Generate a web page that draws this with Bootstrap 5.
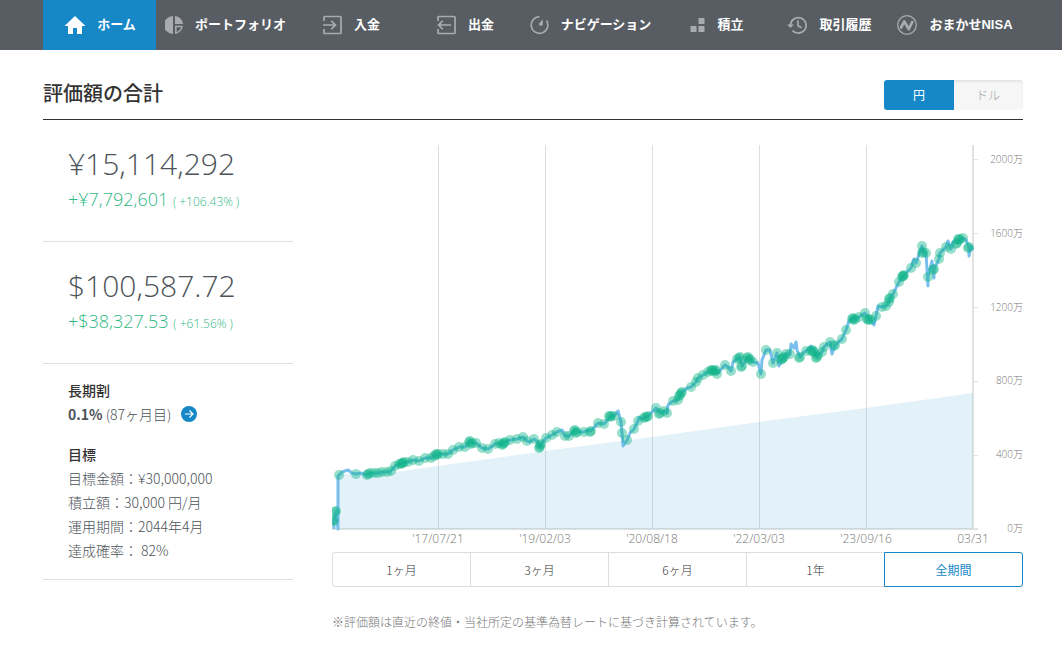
<!DOCTYPE html>
<html lang="ja">
<head>
<meta charset="utf-8">
<meta name="viewport" content="width=device-width, initial-scale=1">
<title>ホーム</title>
<link href="https://cdn.jsdelivr.net/npm/bootstrap@5.3.0/dist/css/bootstrap.min.css" rel="stylesheet">
<style>
body{font-family:"Open Sans","Noto Sans CJK JP",sans-serif;font-weight:300;color:#4d5358;font-size:14px;line-height:24px;background:#fff}
.topbar{background:#575d63;padding:0 35px 0 43px}
.menu{display:grid;grid-template-columns:113fr 139fr 113fr 115fr 135fr 118fr 107fr 144fr}
.menu a{height:50px;color:#fff;font:700 13px/20px "Liberation Sans","Noto Sans CJK JP",sans-serif;white-space:nowrap}
.menu a.active{background:#1788c7}
.menu svg{color:#a9acaf;flex:none;margin-right:12px}
.menu a.active svg{color:#fff;margin-right:10px}
.page{padding:30px 39px 0 43px}
.headline{border-bottom:1px solid #333}
.headline h1{font:500 20px/26px "Noto Sans CJK JP",sans-serif;color:#333;margin:0}
.currency{margin-bottom:9px}
.currency .btn{width:70px;height:30px;padding:0;font:300 12px/28px "Noto Sans CJK JP",sans-serif;border:0;border-radius:3px;color:#9a9ea8;background:#f6f6f6;box-shadow:inset 0 2px 2px #e4e4e4}
.currency .btn + .btn{margin-left:0}
.currency .btn.active{color:#fff;font-weight:400;background:#1788c7;box-shadow:none}
.summary{flex:0 0 250px}
.block{border-bottom:1px solid #e0e0e0;padding-left:25px;height:122px}
.amount{font-size:30px;line-height:40px}
.gain{color:#2fb883;font-size:18px;line-height:30px;white-space:nowrap}
.gain span{font-size:12px}
.plan{border-bottom:1px solid #e0e0e0;padding:14px 0 17px 25px}
.plan h2{font:500 14px/24px "Noto Sans CJK JP",sans-serif;color:#333;margin:0}
.plan p{margin:0;font-family:"Noto Sans CJK JP",sans-serif}
.plan p a{margin-left:10px}
.chartbox{min-width:0;padding-left:39px}
.chartbox svg{display:block;width:100%;height:auto}
.chartbox text{fill:#777;font-size:12px}
.chartbox .ylab text{font-size:10px}
.periods .btn{flex:1 1 0;height:35px;padding:0;border:1px solid #ddd;border-radius:3px;font:300 12px/32px "Noto Sans CJK JP",sans-serif;color:#333}
.periods .btn.active{color:#1788c7;font-weight:400;border-color:#1788c7;background:#fff}
.note{font:300 12px/20px "Noto Sans CJK JP",sans-serif;color:#777;margin:25px 0 0}
</style>
</head>
<body>
<nav class="topbar">
<div class="menu">
<a href="#" class="active d-flex align-items-center justify-content-center text-decoration-none" aria-current="page"><svg width="24" height="20" viewBox="0 0 24 20"><path fill="currentColor" d="M12 1 1.500 11H5v8h5v-6h4v6h5v-8h3.500z"/></svg>ホーム</a>
<a href="#" class="d-flex align-items-center justify-content-center text-decoration-none"><svg width="18" height="20" viewBox="0 0 18 20"><g fill="currentColor"><path d="M8 1a9 9 0 0 0 0 18zM10 1v8h8a9 9 0 0 0-8-8z"/><path fill="none" stroke="currentColor" stroke-width="1.500" d="M10.800 11.500h6.200q-.8 5-6.200 6.500z"/></g></svg>ポートフォリオ</a>
<a href="#" class="d-flex align-items-center justify-content-center text-decoration-none"><svg width="19" height="20" viewBox="0 0 19 20"><g fill="none" stroke="currentColor" stroke-width="1.700"><path d="M1 6V2.200q0-.7.700-.7h15.600q.7 0 .7.700v15.600q0 .7-.7.700H1.700q-.7 0-.7-.7V14M0 10h12M8.300 5.800 12.500 10l-4.200 4.200"/></g></svg>入金</a>
<a href="#" class="d-flex align-items-center justify-content-center text-decoration-none"><svg width="19" height="20" viewBox="0 0 19 20"><g fill="none" stroke="currentColor" stroke-width="1.700"><path d="M1 6V2.200q0-.7.700-.7h15.600q.7 0 .7.700v15.600q0 .7-.7.700H1.700q-.7 0-.7-.7V14M14 10H1.500M5.700 5.800 1.500 10l4.200 4.200"/></g></svg>出金</a>
<a href="#" class="d-flex align-items-center justify-content-center text-decoration-none"><svg width="19" height="20" viewBox="0 0 19 20"><path fill="none" stroke="currentColor" stroke-width="1.600" d="M9.500 1.700A8.300 8.300 0 1 0 16.500 5.500"/><path fill="currentColor" d="M12.800 4.200v5.600q-.6 1.400-2.300.9-2.300-.8-1.200-2.500z"/></svg>ナビゲーション</a>
<a href="#" class="d-flex align-items-center justify-content-center text-decoration-none"><svg width="15" height="20" viewBox="0 0 15 20"><path fill="currentColor" d="M8.500 3h6v6h-6zM.5 11h6v6h-6zM8.500 11h6v6h-6z"/></svg>積立</a>
<a href="#" class="d-flex align-items-center justify-content-center text-decoration-none"><svg width="20" height="20" viewBox="0 0 20 20"><path fill="none" stroke="currentColor" stroke-width="1.700" d="M3.500 10a7.800 7.800 0 1 1 2 5.600M11 5.500v5.200l3.500 2"/><path fill="currentColor" d="M0 9.500h7L3.500 13z"/></svg>取引履歴</a>
<a href="#" class="d-flex align-items-center justify-content-center text-decoration-none"><svg width="20" height="20" viewBox="0 0 20 20"><circle cx="10" cy="10" r="9.300" fill="none" stroke="currentColor" stroke-width="1.300"/><path fill="none" stroke="currentColor" stroke-width="2.700" stroke-linejoin="round" d="m3.500 13.500 3.800-7 4.500 7.500 4-8"/></svg>おまかせNISA</a>
</div>
</nav>
<main class="page">
<header class="headline d-flex justify-content-between align-items-start">
<h1>評価額の合計</h1>
<div class="btn-group currency"><button type="button" class="btn active">円</button><button type="button" class="btn">ドル</button></div>
</header>
<div class="d-flex">
<section class="summary">
<div class="block pt-4"><div class="amount">¥15,114,292</div><div class="gain">+¥7,792,601 <span>( +106.43% )</span></div></div>
<div class="block pt-4"><div class="amount">$100,587.72</div><div class="gain">+$38,327.53 <span>( +61.56% )</span></div></div>
<div class="plan">
<h2>長期割</h2>
<p class="d-flex align-items-center mb-3"><span><b class="fw-bold">0.1%</b> (87ヶ月目)</span><a href="#" class="d-flex" aria-label="長期割の詳細"><svg width="16" height="16" viewBox="0 0 16 16"><circle cx="8" cy="8" r="8" fill="#1788c7"/><path fill="none" stroke="#fff" stroke-width="1.200" d="M4 8h8M8.500 4.500 12 8l-3.500 3.500"/></svg></a></p>
<h2>目標</h2>
<p>目標金額：¥30,000,000</p>
<p>積立額：30,000 円/月</p>
<p>運用期間：2044年4月</p>
<p>達成確率： 82%</p>
</div>
</section>
<section class="chartbox flex-grow-1">
<svg viewBox="332 120 691 432" role="img" aria-label="評価額の推移">
<path stroke="#dedede" d="M438.500 145v384M545.500 145v384M652.500 145v384M759.500 145v384M866.500 145v384"/>
<path stroke="#e2e2e2" stroke-width="2" fill="none" d="M973 145v384M332 529h646"/>
<path stroke="#e2e2e2" d="M974 159.500h4M974 233.500h4M974 307.500h4M974 381.500h4M974 455.500h4"/>
<path fill="#1788c7" fill-opacity=".12" d="M338 529V474L395 472L438 466L545 451L652 437L759 422L866 408L973 393V529z"/>
<polyline id="line" fill="none" stroke="#78bfee" stroke-width="3" stroke-linejoin="round"/>
<g id="dots" fill="#10b588" fill-opacity=".43"></g>
<g class="ylab" text-anchor="end"><text x="1023" y="163">2000万</text><text x="1023" y="237">1600万</text><text x="1023" y="311">1200万</text><text x="1023" y="384">800万</text><text x="1023" y="458">400万</text><text x="1023" y="532">0万</text></g>
<g text-anchor="middle"><text x="438" y="543">'17/07/21</text><text x="545" y="543">'19/02/03</text><text x="652" y="543">'20/08/18</text><text x="759" y="543">'22/03/03</text><text x="866" y="543">'23/09/16</text><text x="973" y="543">03/31</text></g>
</svg>
<div class="btn-group periods d-flex"><button type="button" class="btn">1ヶ月</button><button type="button" class="btn">3ヶ月</button><button type="button" class="btn">6ヶ月</button><button type="button" class="btn">1年</button><button type="button" class="btn active">全期間</button></div>
<p class="note">※評価額は直近の終値・当社所定の基準為替レートに基づき計算されています。</p>
</section>
</div>
</main>
<script src="https://cdn.jsdelivr.net/npm/bootstrap@5.3.0/dist/js/bootstrap.bundle.min.js"></script>
<script>
// x, y, number of deposits/trades recorded around that day (0 = valuation only)
const series = `334 529 0,334 520 2,336 511 2,337 520 0,338 529 0,338 476 0,339 475 1,342 472 0,348 470 0,352 473 0,356 474 1,361 473 0,366 475 0,368 474 2,370 473 1,374 473 1,378 473 1,382 472 1,387 472 1,391 471 1,395 466 1,399 464 1,402 463 2,404 462 2,408 462 1,413 460 1,419 461 1,425 458 1,431 458 1,434 456 1,438 454 3,443 454 1,448 454 1,453 450 1,459 447 1,465 447 1,470 441 2,472 443 2,476 443 1,482 448 1,488 449 1,495 444 1,499 443 1,503 444 2,505 442 2,510 440 1,517 439 1,523 437 1,527 441 1,530 442 0,534 439 1,538 442 0,540 447 2,541 444 2,546 438 1,552 435 1,557 432 1,562 430 0,565 436 1,569 436 1,575 430 2,577 432 2,584 432 1,588 430 0,591 431 2,598 423 1,604 424 1,611 416 3,614 416 1,618 411 0,621 422 1,622 433 1,623 446 0,627 440 1,630 433 0,634 429 1,638 421 1,639 417 0,642 419 0,645 417 2,648 416 2,656 408 1,660 413 2,664 411 1,667 413 1,668 405 0,673 401 1,678 400 1,680 395 2,682 392 2,687 388 0,691 387 1,696 382 1,698 378 1,703 375 1,708 372 1,713 370 3,716 370 2,717 374 1,725 365 1,728 367 0,731 371 1,733 362 0,737 359 1,740 357 2,742 366 2,746 360 0,748 357 2,750 359 2,753 362 1,758 363 0,761 374 1,762 360 0,766 350 1,770 350 0,773 363 1,777 353 1,779 366 0,782 359 2,784 357 2,786 354 1,790 354 1,791 344 0,794 348 0,796 342 0,797 350 0,800 357 2,803 353 0,806 351 1,811 346 0,812 350 2,814 351 2,817 357 2,818 355 1,822 352 1,824 347 1,830 342 1,832 354 0,835 345 2,842 339 1,846 330 1,849 321 0,853 318 2,855 319 2,859 317 1,865 313 1,869 319 3,871 320 1,874 325 0,876 316 1,878 306 0,882 307 1,886 306 1,889 302 1,890 298 2,893 294 1,899 282 1,903 276 2,904 275 2,911 268 1,914 259 0,916 263 1,922 246 1,923 252 2,926 253 1,928 286 0,928 277 1,932 261 0,934 278 0,934 269 2,939 259 1,940 253 1,946 247 1,948 241 0,951 249 1,953 242 0,957 243 2,960 239 3,963 238 1,966 240 0,969 247 2,969 256 0,971 246 0,973 250 0`.split(",").map(p => p.split(" ").map(Number));
document.getElementById("line").setAttribute("points", series.map(p => p[0] + "," + p[1]).join(" "));
const dots = document.getElementById("dots");
for (const [x, y, count] of series) {
  for (let i = 0; i < count; i++) {
    const c = document.createElementNS("http://www.w3.org/2000/svg", "circle");
    c.setAttribute("cx", x - i);
    c.setAttribute("cy", y + i % 2);
    c.setAttribute("r", 5);
    dots.append(c);
  }
}
</script>
</body>
</html>
